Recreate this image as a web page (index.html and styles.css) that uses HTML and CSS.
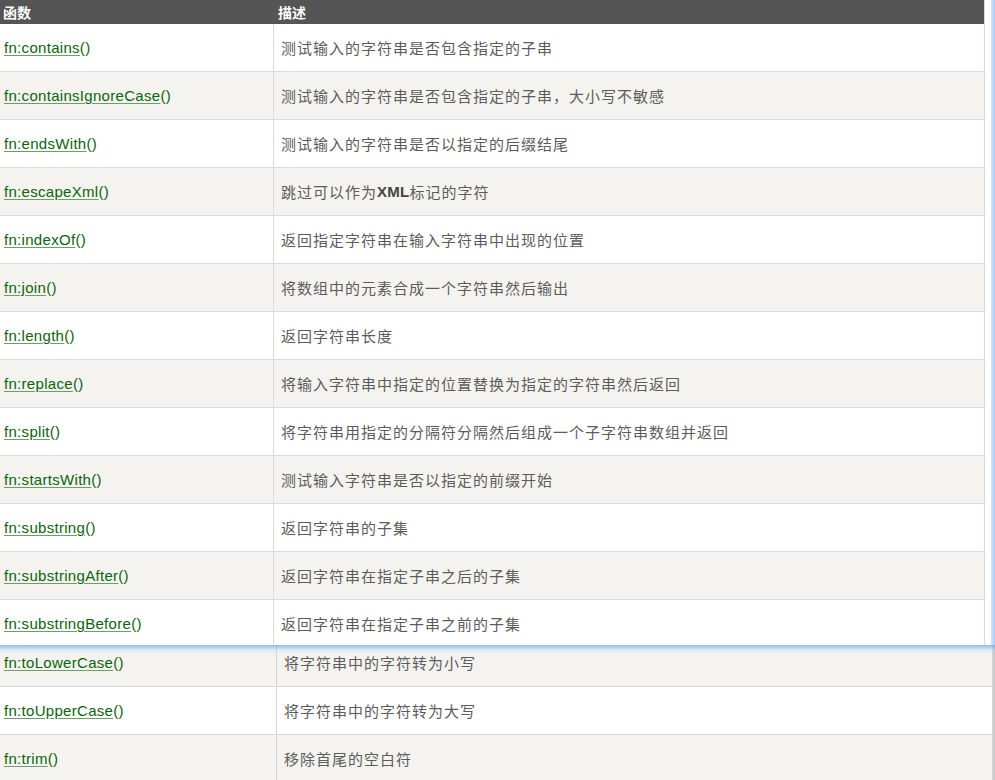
FILE: index.html
```html
<!DOCTYPE html>
<html lang="zh">
<head>
<meta charset="utf-8">
<title>fn functions</title>
<link rel="stylesheet" href="styles.css">
</head>
<body>
<div class="screen">
  <div class="panel">
    <div class="sheet">
      <div class="row head"><div class="h1">函数</div><div class="h2">描述</div></div>
      <div class="row"><div class="c1"><a href="#">fn:contains</a>()</div><div class="c2">测试输入的字符串是否包含指定的子串</div></div>
      <div class="row alt"><div class="c1"><a href="#">fn:containsIgnoreCase</a>()</div><div class="c2">测试输入的字符串是否包含指定的子串，大小写不敏感</div></div>
      <div class="row"><div class="c1"><a href="#">fn:endsWith</a>()</div><div class="c2">测试输入的字符串是否以指定的后缀结尾</div></div>
      <div class="row alt"><div class="c1"><a href="#">fn:escapeXml</a>()</div><div class="c2">跳过可以作为<span class="lat">XML</span>标记的字符</div></div>
      <div class="row"><div class="c1"><a href="#">fn:indexOf</a>()</div><div class="c2">返回指定字符串在输入字符串中出现的位置</div></div>
      <div class="row alt"><div class="c1"><a href="#">fn:join</a>()</div><div class="c2">将数组中的元素合成一个字符串然后输出</div></div>
      <div class="row"><div class="c1"><a href="#">fn:length</a>()</div><div class="c2">返回字符串长度</div></div>
      <div class="row alt"><div class="c1"><a href="#">fn:replace</a>()</div><div class="c2">将输入字符串中指定的位置替换为指定的字符串然后返回</div></div>
      <div class="row"><div class="c1"><a href="#">fn:split</a>()</div><div class="c2">将字符串用指定的分隔符分隔然后组成一个子字符串数组并返回</div></div>
      <div class="row alt"><div class="c1"><a href="#">fn:startsWith</a>()</div><div class="c2">测试输入字符串是否以指定的前缀开始</div></div>
      <div class="row"><div class="c1"><a href="#">fn:substring</a>()</div><div class="c2">返回字符串的子集</div></div>
      <div class="row alt"><div class="c1"><a href="#">fn:substringAfter</a>()</div><div class="c2">返回字符串在指定子串之后的子集</div></div>
      <div class="row"><div class="c1"><a href="#">fn:substringBefore</a>()</div><div class="c2">返回字符串在指定子串之前的子集</div></div>
    </div>
    <div class="gap"></div>
    <div class="edge"></div>
  </div>
  <div class="under">
    <div class="sheet2">
      <div class="row2 alt"><div class="d1"><a href="#">fn:toLowerCase</a>()</div><div class="d2">将字符串中的字符转为小写</div></div>
      <div class="row2"><div class="d1"><a href="#">fn:toUpperCase</a>()</div><div class="d2">将字符串中的字符转为大写</div></div>
      <div class="row2 alt"><div class="d1"><a href="#">fn:trim</a>()</div><div class="d2">移除首尾的空白符</div></div>
    </div>
  </div>
</div>
</body>
</html>
```
FILE: styles.css
```css
html, body {
  margin: 0;
  padding: 0;
  background: #ffffff;
}
body {
  width: 995px;
  height: 780px;
  overflow: hidden;
}
.screen {
  display: flex;
  flex-direction: column;
  width: 995px;
}
.panel {
  position: relative;
  z-index: 2;
  display: flex;
  height: 645px;
  background: #ffffff;
}
.panel::after {
  content: "";
  position: absolute;
  left: 0;
  right: 0;
  top: 100%;
  height: 9px;
  background: linear-gradient(to bottom, rgba(120, 170, 235, 0.8), rgba(180, 210, 245, 0.3) 55%, rgba(244, 243, 240, 0));
}
.sheet {
  width: 984px;
  border-right: 1px solid #dcdcdc;
  overflow: hidden;
  flex: none;
}
.gap {
  width: 6px;
  flex: none;
  background: #ffffff;
}
.edge {
  flex: 1;
  background: linear-gradient(to right, #d6e6fa, #bcd5f5 60%, #a9c8f0);
}
.row {
  display: grid;
  grid-template-columns: 274px 1fr;
  height: 48px;
  box-sizing: border-box;
  border-bottom: 1px solid #dcdcdc;
  background: #ffffff;
}
.row.alt, .row2.alt {
  background: #f4f3f0;
}
.row.head {
  height: 24px;
  background: #555555;
  border-bottom: none;
}
.h1, .h2 {
  display: flex;
  align-items: center;
  color: #ffffff;
  font-family: "Noto Sans CJK SC", "Liberation Sans", sans-serif;
  font-weight: bold;
  font-size: 14px;
}
.h1 {
  padding-left: 3px;
}
.h2 {
  padding-left: 4px;
}
.c1, .d1 {
  display: flex;
  align-items: center;
  padding-left: 4px;
  border-right: 1px solid #dcdcdc;
  font-family: "Liberation Sans", Arial, sans-serif;
  font-size: 15px;
  letter-spacing: 0.3px;
  color: #0b650b;
}
.c2, .d2 {
  display: flex;
  align-items: center;
  padding-left: 7px;
  font-family: "Noto Sans CJK SC", "Liberation Sans", sans-serif;
  font-size: 15px;
  letter-spacing: 1px;
  color: #5c5c5c;
}
.c1 a, .d1 a {
  color: #0b650b;
  text-decoration: underline;
  text-decoration-color: #6a9e6a;
  text-underline-offset: 2px;
}
.lat {
  font-family: "Liberation Sans", Arial, sans-serif;
  font-weight: bold;
  font-size: 15px;
  letter-spacing: 0.3px;
  color: #444444;
}
.under {
  position: relative;
  z-index: 1;
  margin-top: -6px;
  display: flex;
  background: #c9c9c9;
}
.sheet2 {
  width: 992px;
  border-right: 1px solid #d4d4d4;
}
.row2 {
  display: grid;
  grid-template-columns: 277px 1fr;
  height: 48px;
  box-sizing: border-box;
  border-bottom: 1px solid #d8d8d8;
  background: #ffffff;
}
.d1 {
  border-right: 1px solid #d4d4d4;
}
.d2 {
  padding-left: 7px;
}
```
